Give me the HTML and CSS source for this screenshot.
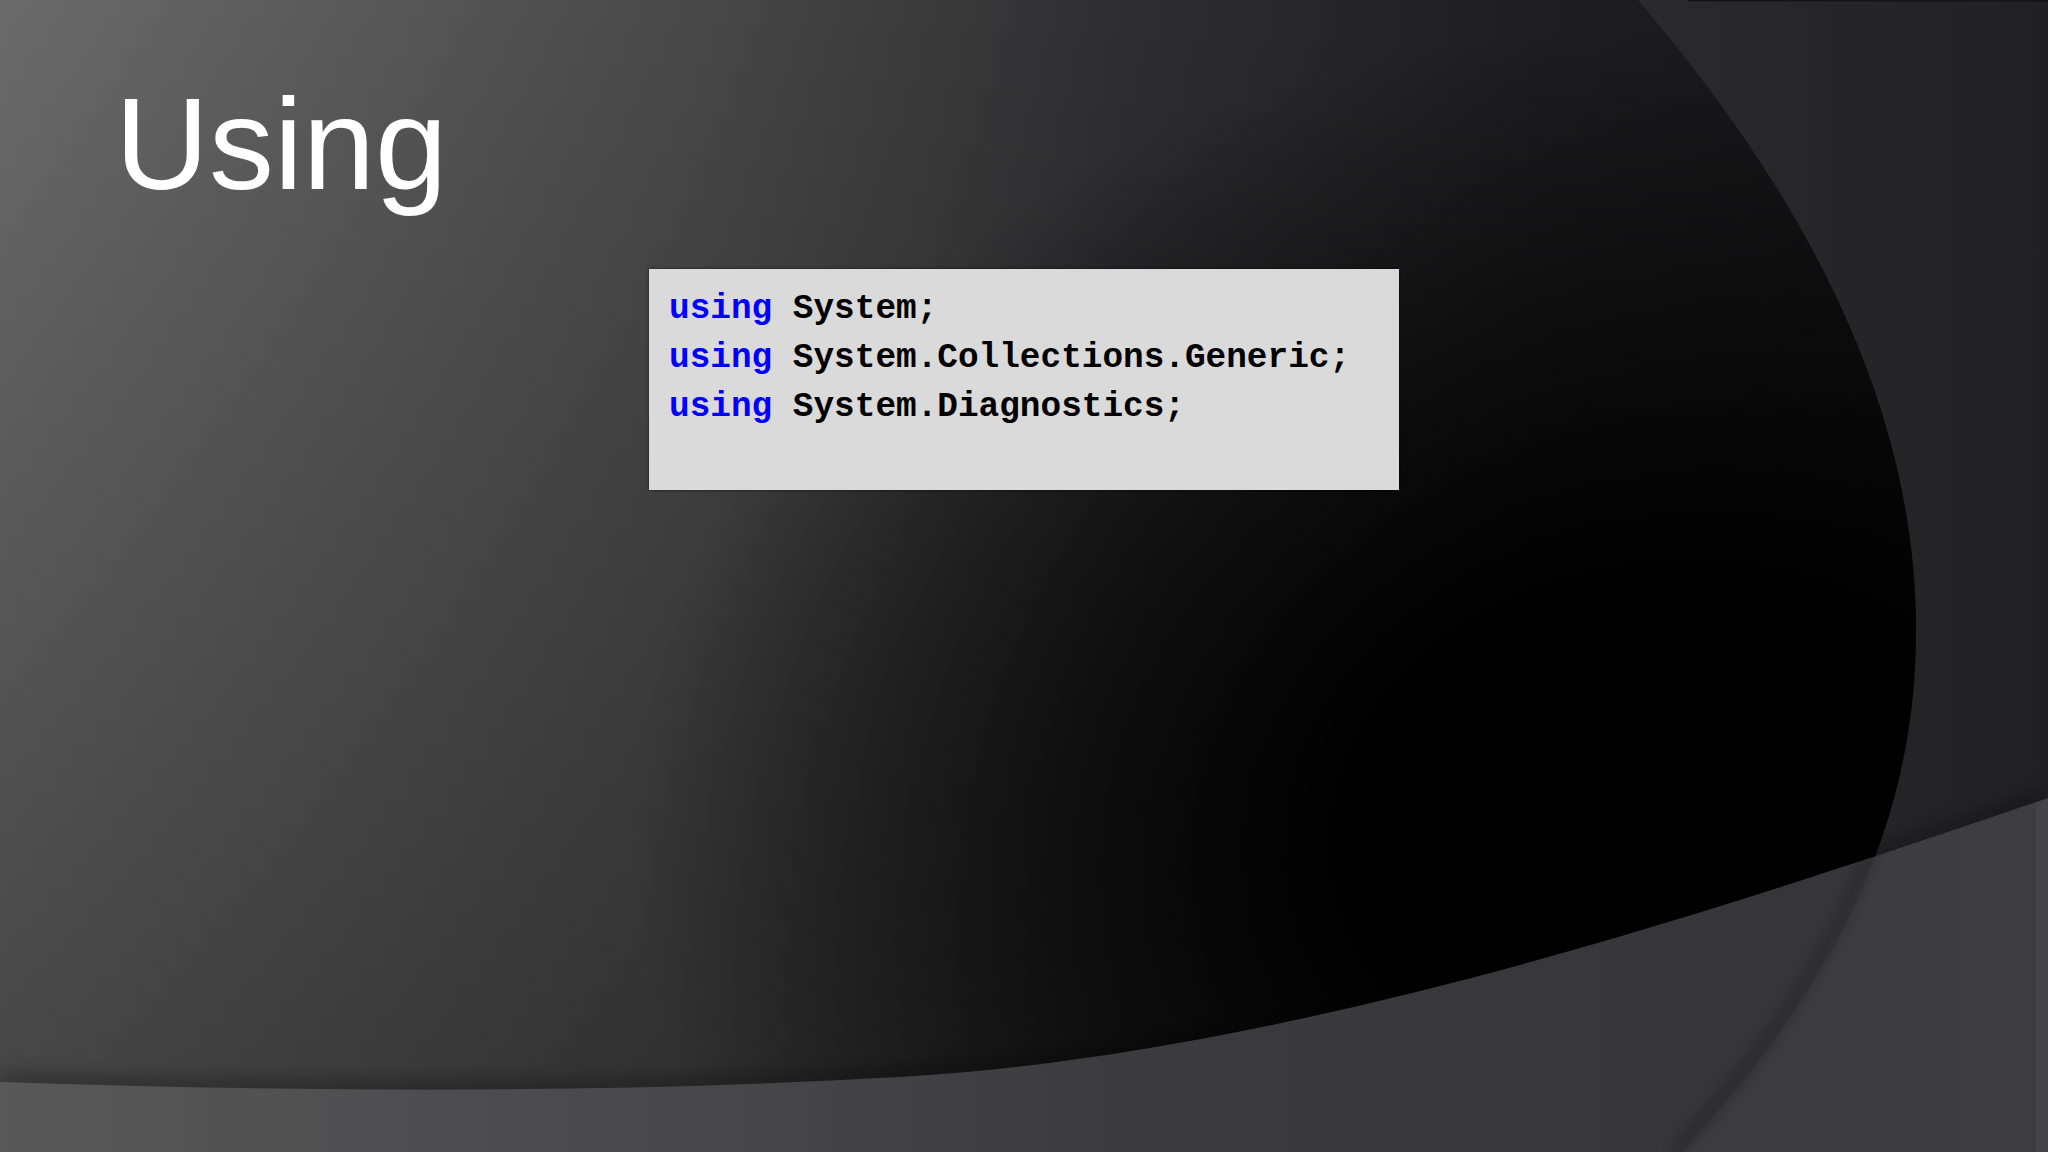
FILE: index.html
```html
<!DOCTYPE html>
<html lang="en">
<head>
    <meta charset="utf-8">
    <title>Using</title>
    <link rel="stylesheet" href="styles.css">
</head>

<body>
    <div class="slide">
        <!-- backdrop: lit panel, right swoosh and bottom band -->
        <svg class="backdrop" viewBox="0 0 2048 1152" preserveAspectRatio="none">
            <defs>
                <linearGradient id="lit" gradientUnits="userSpaceOnUse" x1="0" y1="0" x2="2048" y2="0">
                    <stop offset="0" stop-color="#6a6a6a"/>
                    <stop offset="0.34" stop-color="#484848"/>
                    <stop offset="0.55" stop-color="#2e2e30"/>
                    <stop offset="0.75" stop-color="#1e1e20"/>
                    <stop offset="1" stop-color="#151517"/>
                </linearGradient>
                <linearGradient id="fall" gradientUnits="userSpaceOnUse" x1="0" y1="0" x2="0" y2="1152">
                    <stop offset="0" stop-color="#000" stop-opacity="0"/>
                    <stop offset="1" stop-color="#000" stop-opacity="0.36"/>
                </linearGradient>
                <radialGradient id="hole" gradientUnits="userSpaceOnUse" cx="1680" cy="840" r="1050"
                    gradientTransform="translate(1680 840) scale(1 0.78) translate(-1680 -840)">
                    <stop offset="0" stop-color="#000" stop-opacity="1"/>
                    <stop offset="0.3" stop-color="#000" stop-opacity="1"/>
                    <stop offset="1" stop-color="#000" stop-opacity="0"/>
                </radialGradient>
                <linearGradient id="side" gradientUnits="userSpaceOnUse" x1="1640" y1="0" x2="2048" y2="0">
                    <stop offset="0" stop-color="#2a2a2c"/>
                    <stop offset="1" stop-color="#212023"/>
                </linearGradient>
                <linearGradient id="band" gradientUnits="userSpaceOnUse" x1="0" y1="0" x2="2048" y2="0">
                    <stop offset="0" stop-color="#585858"/>
                    <stop offset="0.35" stop-color="#474649"/>
                    <stop offset="0.55" stop-color="#3b3a3d"/>
                    <stop offset="0.85" stop-color="#363538"/>
                    <stop offset="1" stop-color="#38373a"/>
                </linearGradient>
                <filter id="soft" x="-10%" y="-10%" width="120%" height="120%">
                    <feGaussianBlur stdDeviation="8"/>
                </filter>
                <path id="main" d="M0,0 L1638,0 C1800,190 1916,400 1916,630 C1916,830 1830,990 1682,1152 L0,1152 Z"/>
                <path id="bandShape" d="M0,1082 C300,1092 600,1094 900,1077 C1300,1054 1748,900 2048,798 L2048,1152 L0,1152 Z"/>
                <clipPath id="bandClip">
                    <use href="#bandShape"/>
                </clipPath>
            </defs>

            <rect width="2048" height="1152" fill="url(#side)"/>
            <rect x="1688" y="0" width="360" height="1.5" fill="#141414"/>

            <use href="#main" fill="url(#lit)"/>
            <use href="#main" fill="url(#fall)"/>
            <use href="#main" fill="url(#hole)"/>

            <path d="M0,1082 C300,1092 600,1094 900,1077 C1300,1054 1748,900 2048,798"
                fill="none" stroke="#000" stroke-width="22" stroke-opacity="0.25" filter="url(#soft)"/>

            <use href="#bandShape" fill="url(#band)"/>
            <g clip-path="url(#bandClip)">
                <path d="M1638,0 C1800,190 1916,400 1916,630 C1916,830 1830,990 1682,1152 L2048,1152 L2048,0 Z"
                    fill="#fff" fill-opacity="0.03"/>
                <path d="M1916,630 C1916,830 1830,990 1682,1152" transform="translate(-7 0)"
                    fill="none" stroke="#000" stroke-width="10" stroke-opacity="0.3" filter="url(#soft)"/>
                <rect x="2036" y="0" width="12" height="1152" fill="#fff" fill-opacity="0.03"/>
            </g>
        </svg>

        <h1 class="title">Using</h1>

        <pre class="code"><span class="kw">using</span> System;
<span class="kw">using</span> System.Collections.Generic;
<span class="kw">using</span> System.Diagnostics;</pre>
    </div>
</body>
</html>
```

FILE: styles.css
```css
*{margin:0; padding:0;}
body{
    background:#000;
}
.slide{
    position:relative;
    width:2048px; height:1152px;
    overflow:hidden;
}
.backdrop{
    position:absolute;
    left:0; top:0;
    width:100%; height:100%;
}
.title{
    position:relative;
    height:214px;
    padding:79px 0 0 115px;
    box-sizing:border-box;
    font:normal 130px/1 "Liberation Sans", Arial, sans-serif;
    color:#fff;
}
.code{
    position:relative;
    width:750px; height:221px;
    margin:55px 0 0 649px;
    padding:15px 20px;
    box-sizing:border-box;
    background:#dadada;
    box-shadow:0 0 3px rgba(0,0,0,0.6);
    font:bold 34.4px/49px "Liberation Mono", "Courier New", monospace;
    color:#000;
}
.code .kw{
    color:#0000ff;
}
```
